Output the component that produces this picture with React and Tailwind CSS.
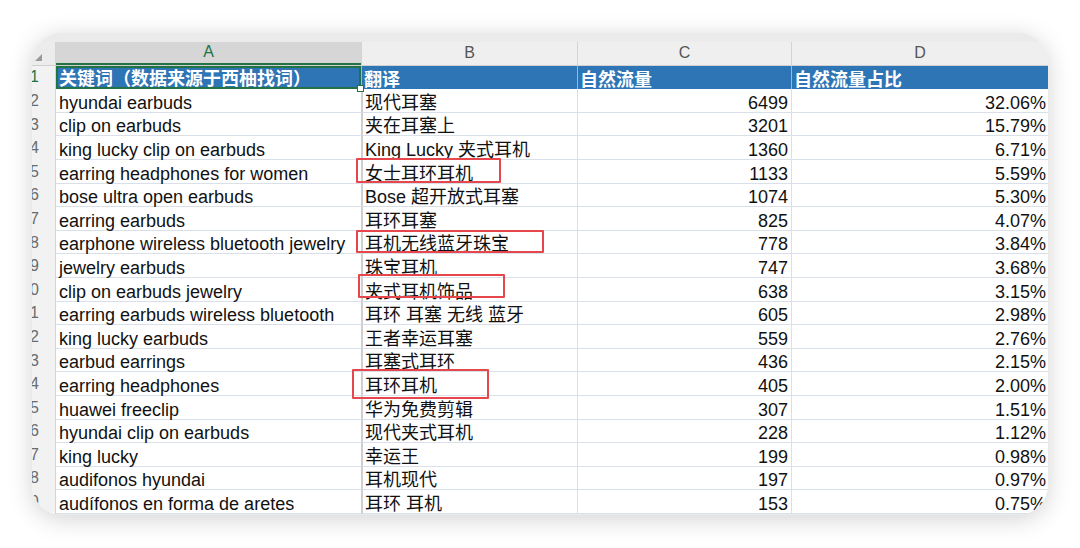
import React from 'react';

const rows = [
  ['hyundai earbuds', '现代耳塞', '6499', '32.06%'],
  ['clip on earbuds', '夹在耳塞上', '3201', '15.79%'],
  ['king lucky clip on earbuds', 'King Lucky 夹式耳机', '1360', '6.71%'],
  ['earring headphones for women', '女士耳环耳机', '1133', '5.59%'],
  ['bose ultra open earbuds', 'Bose 超开放式耳塞', '1074', '5.30%'],
  ['earring earbuds', '耳环耳塞', '825', '4.07%'],
  ['earphone wireless bluetooth jewelry', '耳机无线蓝牙珠宝', '778', '3.84%'],
  ['jewelry earbuds', '珠宝耳机', '747', '3.68%'],
  ['clip on earbuds jewelry', '夹式耳机饰品', '638', '3.15%'],
  ['earring earbuds wireless bluetooth', '耳环 耳塞 无线 蓝牙', '605', '2.98%'],
  ['king lucky earbuds', '王者幸运耳塞', '559', '2.76%'],
  ['earbud earrings', '耳塞式耳环', '436', '2.15%'],
  ['earring headphones', '耳环耳机', '405', '2.00%'],
  ['huawei freeclip', '华为免费剪辑', '307', '1.51%'],
  ['hyundai clip on earbuds', '现代夹式耳机', '228', '1.12%'],
  ['king lucky', '幸运王', '199', '0.98%'],
  ['audifonos hyundai', '耳机现代', '197', '0.97%'],
  ['audífonos en forma de aretes', '耳环 耳机', '153', '0.75%'],
];

// red highlight boxes, coordinates relative to the card
const marks = [
  { left: 324, top: 125, width: 145, height: 25 },
  { left: 324, top: 197, width: 188, height: 23 },
  { left: 326, top: 241, width: 147, height: 24 },
  { left: 320, top: 336, width: 137, height: 30 },
];

const font = { fontFamily: '"Liberation Sans", "Noto Sans CJK SC", sans-serif' };

const RowNum = ({ n, active }) => (
  <div className="w-[24px] shrink-0 h-full flex items-center justify-end pr-[16px] bg-[#f2f2f2] border-r border-[#d4d4d4] overflow-hidden">
    <span className={`text-[16px] leading-none whitespace-nowrap ${active ? 'text-[#217346]' : 'text-[#6b6b6b]'}`}>{n}</span>
  </div>
);

const App = () => {
  return (
    <div className="w-[1080px] h-[548px] bg-white pt-[33px] pl-[32px]" style={font}>
      <div className="relative w-[1016px] h-[482px] rounded-[30px] overflow-hidden bg-[#ebebeb] shadow-[0_4px_24px_rgba(0,0,0,0.18)]">
        <div className="h-[9px]" />

        {/* column letters */}
        <div className="flex h-[23.6px] bg-[#efefef] border-b border-[#d0d0d0]">
          <div className="w-[24px] shrink-0 relative bg-[#ececec] border-r border-[#d4d4d4]">
            <div className="absolute left-[3px] bottom-[4px] w-0 h-0 border-l-[7px] border-l-transparent border-b-[7px] border-b-[#9a9a9a]" />
          </div>
          <div className="w-[305px] shrink-0 flex items-center justify-center bg-[#d6d6d6] border-b-2 border-[#217346] text-[#217346] text-[16px]">A</div>
          <div className="w-[216px] shrink-0 flex items-center justify-center border-l border-[#d4d4d4] text-[#555] text-[16px]">B</div>
          <div className="w-[214px] shrink-0 flex items-center justify-center border-l border-[#d4d4d4] text-[#555] text-[16px]">C</div>
          <div className="w-[257px] shrink-0 flex items-center justify-center border-l border-[#d4d4d4] text-[#555] text-[16px]">D</div>
        </div>

        {/* header row */}
        <div className="flex h-[23.6px] bg-white">
          <RowNum n={1} active />
          <div className="relative w-[305px] shrink-0 h-full bg-[#2e75b6] border-2 border-[#217346] flex items-end pl-[1px] text-white font-bold text-[18px] leading-[15px] whitespace-nowrap">
            关键词（数据来源于西柚找词）
            <div className="absolute right-[-5px] bottom-[-5px] w-[7px] h-[7px] bg-white border border-[#217346] z-10" />
          </div>
          <div className="w-[216px] shrink-0 h-full bg-[#2e75b6] border-l border-[#9bb7d6] flex items-end pb-[1px] pl-[2px] text-white font-bold text-[18px] leading-[15px]">翻译</div>
          <div className="w-[214px] shrink-0 h-full bg-[#2e75b6] border-l border-[#9bb7d6] flex items-end pb-[1px] pl-[2px] text-white font-bold text-[18px] leading-[15px]">自然流量</div>
          <div className="w-[257px] shrink-0 h-full bg-[#2e75b6] border-l border-[#9bb7d6] flex items-end pb-[1px] pl-[2px] text-white font-bold text-[18px] leading-[15px]">自然流量占比</div>
        </div>

        {rows.map((r, i) => (
          <div key={i} className="flex h-[23.6px] bg-white">
            <RowNum n={i + 2} />
            <div className="w-[305px] shrink-0 h-full border-b border-[#dae0ea] flex items-end pl-[3px] text-[18px] leading-[18px] text-[#111] whitespace-nowrap">{r[0]}</div>
            <div className="w-[216px] shrink-0 h-full border-b border-[#dae0ea] border-l-2 border-l-[#cfcfcf] flex items-end pl-[2px] text-[18px] leading-[18px] text-[#111] whitespace-nowrap">{r[1]}</div>
            <div className="w-[214px] shrink-0 h-full border-b border-[#dae0ea] border-l border-l-[#dae0ea] flex items-end justify-end pr-[3px] text-[18px] leading-[18px] text-[#111]">{r[2]}</div>
            <div className="w-[257px] shrink-0 h-full border-b border-[#dae0ea] border-l border-l-[#dae0ea] flex items-end justify-end pr-[2px] text-[18px] leading-[18px] text-[#111]">{r[3]}</div>
          </div>
        ))}

        {marks.map((m, i) => (
          <div
            key={i}
            className="absolute border-2 border-[#e5474c] rounded-[1px]"
            style={{ left: m.left, top: m.top, width: m.width, height: m.height }}
          />
        ))}
      </div>
    </div>
  );
};

export default App;
